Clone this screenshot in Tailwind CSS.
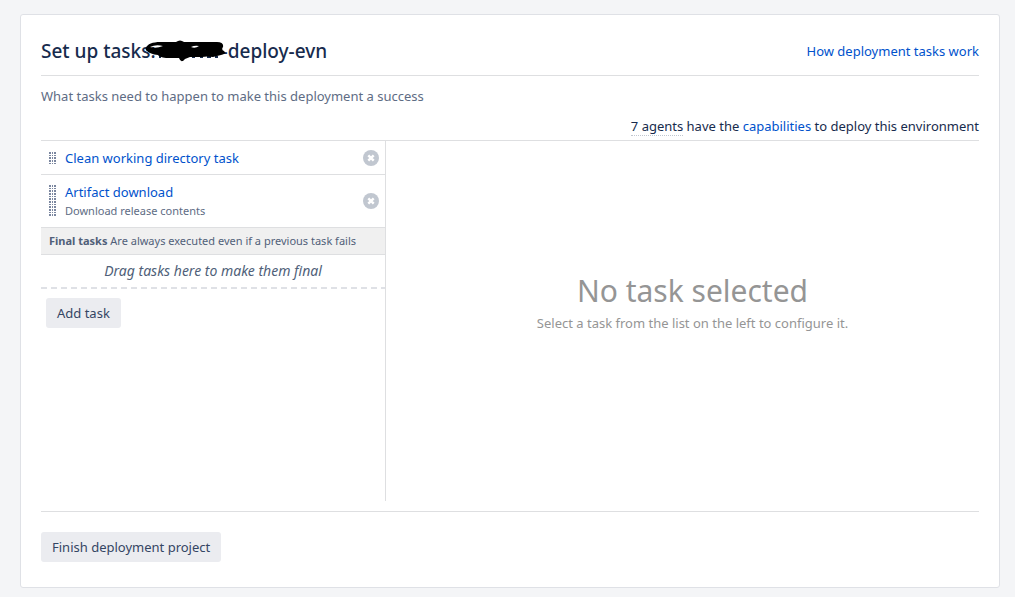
<!DOCTYPE html>
<html lang="en">
<head>
<meta charset="utf-8">
<meta name="viewport" content="width=device-width, initial-scale=1">
<title>Set up tasks</title>
<script src="https://cdn.jsdelivr.net/npm/@tailwindcss/browser@4"></script>
</head>
<body class="bg-[#f4f5f7] pr-[15px] pl-5 pt-[14px] pb-2 font-['Noto_Sans',sans-serif] text-[13px] leading-5 text-[#172b4d]">
<main class="rounded-[3px] border border-[#dfe1e6] bg-white px-5 pt-6 pb-[25px]">
  <header class="flex items-center justify-between border-b border-[#dedfe1] pb-3">
    <h1 class="flex text-[19px] leading-6 font-medium whitespace-pre">Set up tasks:<span class="relative w-[66px]"><svg class="absolute -left-[11px] top-0 h-6 w-[82px]" viewBox="0 0 82 24" aria-hidden="true">
      <path d="M14 17h2v2h-2zM47 17h3v2h-3zM55 17h3v2h-3zM62 17h4v2h-4zM70 17h3v2h-3z" fill="#172b4d"/>
      <path fill-rule="evenodd" d="M1 9C2 5 8 3 15 3L31 3Q35 0 39 3L72 3Q79 3 78 8Q76 11 79 12Q82 15 76 16L68 18Q62 17 57 18L45 18L40 20Q36 25 34 19L21 19Q14 18 13 16Q5 15 2 12Q0 11 1 9ZM5 8Q11 10 18 7Q11 5 5 8ZM46 8Q50 10 54 7Q50 6 46 8Z" fill="#000"/>
    </svg></span>-deploy-evn</h1>
    <a href="#" class="text-[#0052cc]">How deployment tasks work</a>
  </header>
  <p class="mt-[10px] text-[#5e6c84]">What tasks need to happen to make this deployment a success</p>
  <p class="mt-[10px] mb-1 text-right"><span class="border-b border-dotted border-[#c1c7d0]">7 agents</span> have the <a href="#" class="text-[#0052cc]">capabilities</a> to deploy this environment</p>
  <div class="flex min-h-[361px] border-t border-[#dedfe1]">
    <section class="w-[345px] shrink-0 border-r border-[#dedfe1]">
      <ul>
        <li class="flex items-center border-b border-[#dedfe1] pt-[7px] pb-[6px] pr-[6px] pl-2">
          <svg class="h-[13px] w-[7px]" viewBox="0 0 7 13" shape-rendering="crispEdges" aria-hidden="true"><defs><pattern id="grip" width="8" height="8" patternUnits="userSpaceOnUse"><path d="M0 0h2v2H0zM3 0h1v2H3zM5 0h2v2H5zM0 3h2v1H0zM3 3h1v1H3zM5 3h2v1H5zM0 5h2v2H0zM3 5h1v2H3zM5 5h2v2H5z" fill="#7a869f"/></pattern></defs><path d="M0 0h7v13H0z" fill="url(#grip)"/></svg>
          <a href="#" class="ml-[9px] flex-1 text-[#0052cc]">Clean working directory task</a>
          <button type="button" aria-label="Remove Clean working directory task"><svg class="size-4" viewBox="0 0 16 16"><circle cx="8" cy="8" r="8" fill="#c1c7d0"/><path d="M5.3 5.3l5.4 5.4M10.7 5.3l-5.4 5.4" stroke="#fff" stroke-width="2.4"/></svg></button>
        </li>
        <li class="flex items-center border-b border-[#dedfe1] py-[7px] pr-[6px] pl-2">
          <svg class="h-8 w-[7px]" viewBox="0 0 7 32" shape-rendering="crispEdges" aria-hidden="true"><path d="M0 0h7v32H0z" fill="url(#grip)"/></svg>
          <div class="ml-[9px] flex-1"><a href="#" class="block text-[#0052cc]">Artifact download</a><div class="text-[11px] leading-[18px] text-[#5e6c84]">Download release contents</div></div>
          <button type="button" aria-label="Remove Artifact download"><svg class="size-4" viewBox="0 0 16 16"><circle cx="8" cy="8" r="8" fill="#c1c7d0"/><path d="M5.3 5.3l5.4 5.4M10.7 5.3l-5.4 5.4" stroke="#fff" stroke-width="2.4"/></svg></button>
        </li>
      </ul>
      <h2 class="border-b border-[#dedfe1] bg-[#f0f0f0] px-2 py-1 text-[11px] leading-[18px] text-[#505f79]"><strong>Final tasks</strong> Are always executed even if a previous task fails</h2>
      <p class="py-[6px] text-center text-[14px] leading-5 text-[#505f79] italic">Drag tasks here to make them final</p>
      <svg class="block h-[2px] w-full" aria-hidden="true"><line x1="0" y1="1" x2="100%" y2="1" stroke="#dfe1e6" stroke-width="2" stroke-dasharray="6 4"/></svg>
      <button type="button" class="mt-[9px] ml-[5px] h-[30px] rounded-[3px] bg-[#ebecf0] px-[11px] text-[#344563]">Add task</button>
    </section>
    <section class="flex-1 pt-[130px] pl-5 text-center text-[#959595]">
      <h2 class="text-[30px] leading-10">No task selected</h2>
      <p class="mt-[2px]">Select a task from the list on the left to configure it.</p>
    </section>
  </div>
  <footer class="mt-[10px] border-t border-[#dedfe1] pt-5">
    <button type="button" class="block h-[30px] rounded-[3px] bg-[#ebecf0] px-[11px] text-[#344563]">Finish deployment project</button>
  </footer>
</main>
</body>
</html>
